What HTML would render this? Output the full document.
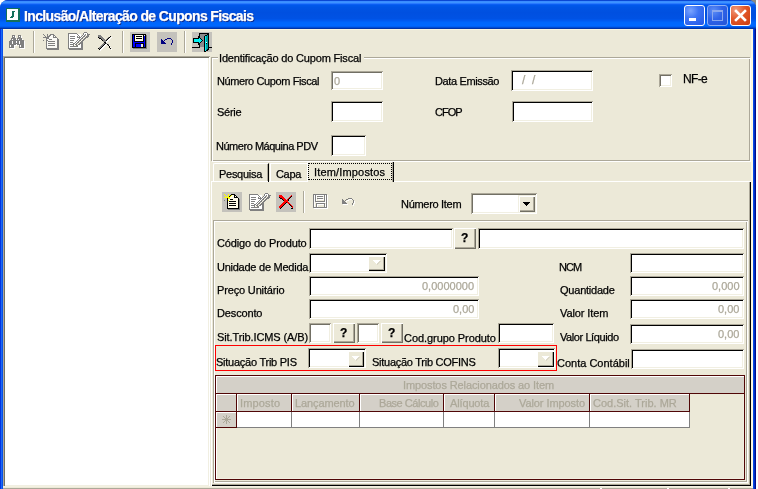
<!DOCTYPE html><html><head><meta charset="utf-8"><style>
html,body{margin:0;padding:0;width:758px;height:489px;overflow:hidden;background:#fff}
div{position:absolute;box-sizing:border-box}
.t{will-change:transform;-webkit-text-stroke:0.25px currentColor}
svg{position:absolute}
</style></head><body>
<div style="left:0px;top:0px;width:758px;height:489px;background:#fff"></div>
<div style="left:748px;top:0px;width:8px;height:6px;background:#8a8a82"></div>
<div style="left:0px;top:0px;width:756px;height:489px;background:#0a4ee0;border-radius:8px 8px 0 0;overflow:hidden"></div>
<div style="left:0px;top:0px;width:756px;height:29px;border-radius:8px 8px 0 0;background:linear-gradient(#0a47d4 0.5px,#3a8cff 1.5px,#3d93ff 2.5px,#2a7bff 3.5px,#0b5ef2 4.5px,#0058ea 5.5px,#0054e4 7.5px,#0050e0 12.5px,#0052e4 18.5px,#005af0 20.5px,#0066fc 22.5px,#0068ff 25.5px,#0060f4 26.5px,#004cd4 27.5px,#0034a8 28.5px)"></div>
<div style="left:753px;top:29px;width:1px;height:460px;background:#0a48e8"></div>
<div style="left:754px;top:29px;width:1px;height:460px;background:#0030c0"></div>
<div style="left:755px;top:29px;width:1px;height:460px;background:#000c90"></div>
<div style="left:0px;top:29px;width:1px;height:460px;background:#0434e0"></div>
<div style="left:1px;top:29px;width:1px;height:460px;background:#1a6af5"></div>
<div style="left:2px;top:29px;width:1px;height:460px;background:#0850e8"></div>
<div style="left:3px;top:29px;width:750px;height:460px;background:#ece9d8"></div>
<div style="left:3px;top:29px;width:750px;height:1px;background:#fbf5de"></div>
<div style="left:751px;top:29px;width:1px;height:460px;background:#fdf8e0"></div>
<div style="left:752px;top:29px;width:1px;height:460px;background:#fffbe4"></div>
<svg style="position:absolute;left:6px;top:8px" width="14" height="14" shape-rendering="crispEdges"><rect x="0" y="0" width="14" height="1" fill="#14705c"/><rect x="0" y="1" width="1" height="1" fill="#14705c"/><rect x="1" y="1" width="11" height="1" fill="#ffffff"/><rect x="12" y="1" width="2" height="1" fill="#14705c"/><rect x="0" y="2" width="1" height="1" fill="#14705c"/><rect x="1" y="2" width="11" height="1" fill="#ffffff"/><rect x="12" y="2" width="2" height="1" fill="#14705c"/><rect x="0" y="3" width="1" height="1" fill="#14705c"/><rect x="1" y="3" width="5" height="1" fill="#ffffff"/><rect x="6" y="3" width="3" height="1" fill="#14705c"/><rect x="9" y="3" width="3" height="1" fill="#ffffff"/><rect x="12" y="3" width="2" height="1" fill="#14705c"/><rect x="0" y="4" width="1" height="1" fill="#14705c"/><rect x="1" y="4" width="5" height="1" fill="#ffffff"/><rect x="6" y="4" width="2" height="1" fill="#14705c"/><rect x="8" y="4" width="4" height="1" fill="#ffffff"/><rect x="12" y="4" width="2" height="1" fill="#14705c"/><rect x="0" y="5" width="1" height="1" fill="#14705c"/><rect x="1" y="5" width="5" height="1" fill="#ffffff"/><rect x="6" y="5" width="2" height="1" fill="#14705c"/><rect x="8" y="5" width="4" height="1" fill="#ffffff"/><rect x="12" y="5" width="2" height="1" fill="#14705c"/><rect x="0" y="6" width="1" height="1" fill="#14705c"/><rect x="1" y="6" width="5" height="1" fill="#ffffff"/><rect x="6" y="6" width="2" height="1" fill="#14705c"/><rect x="8" y="6" width="4" height="1" fill="#ffffff"/><rect x="12" y="6" width="2" height="1" fill="#14705c"/><rect x="0" y="7" width="1" height="1" fill="#14705c"/><rect x="1" y="7" width="5" height="1" fill="#ffffff"/><rect x="6" y="7" width="2" height="1" fill="#14705c"/><rect x="8" y="7" width="4" height="1" fill="#ffffff"/><rect x="12" y="7" width="2" height="1" fill="#14705c"/><rect x="0" y="8" width="1" height="1" fill="#14705c"/><rect x="1" y="8" width="4" height="1" fill="#ffffff"/><rect x="5" y="8" width="3" height="1" fill="#14705c"/><rect x="8" y="8" width="4" height="1" fill="#ffffff"/><rect x="12" y="8" width="2" height="1" fill="#14705c"/><rect x="0" y="9" width="1" height="1" fill="#14705c"/><rect x="1" y="9" width="3" height="1" fill="#ffffff"/><rect x="4" y="9" width="3" height="1" fill="#14705c"/><rect x="7" y="9" width="5" height="1" fill="#ffffff"/><rect x="12" y="9" width="2" height="1" fill="#14705c"/><rect x="0" y="10" width="1" height="1" fill="#14705c"/><rect x="1" y="10" width="11" height="1" fill="#ffffff"/><rect x="12" y="10" width="2" height="1" fill="#14705c"/><rect x="0" y="11" width="1" height="1" fill="#14705c"/><rect x="1" y="11" width="11" height="1" fill="#ffffff"/><rect x="12" y="11" width="2" height="1" fill="#14705c"/><rect x="0" y="12" width="14" height="1" fill="#14705c"/><rect x="0" y="13" width="14" height="1" fill="#14705c"/></svg>
<div style="left:684px;top:5px;width:21px;height:21px;background:radial-gradient(circle at 30% 25%,#7aa4ff 0,#3d74f4 40%,#2257e6 100%);border:1px solid #fff;border-radius:3px"></div>
<div style="left:707px;top:5px;width:21px;height:21px;background:radial-gradient(circle at 30% 25%,#5d8ef6 0,#2f63e8 45%,#2354d6 100%);border:1px solid #8fb0f5;border-radius:3px"></div>
<div style="left:730px;top:5px;width:21px;height:21px;background:radial-gradient(circle at 25% 20%,#f09a7c 0,#e2582a 45%,#cc3c0e 100%);border:1px solid #fff;border-radius:3px"></div>
<div style="left:689px;top:18px;width:7px;height:3px;background:#fff"></div>
<div style="left:712px;top:10px;width:11px;height:11px;border:1px solid #8aa8ee;border-top-width:2px"></div>
<svg style="position:absolute;left:730px;top:5px" width="21" height="21"><path d="M6 6 L15 15 M15 6 L6 15" stroke="#fff" stroke-width="2.6" stroke-linecap="square"/></svg>
<div style="left:33px;top:31px;width:1px;height:22px;background:#aca899"></div>
<div style="left:34px;top:31px;width:1px;height:22px;background:#fff"></div>
<div style="left:122px;top:31px;width:1px;height:22px;background:#aca899"></div>
<div style="left:123px;top:31px;width:1px;height:22px;background:#fff"></div>
<div style="left:184px;top:31px;width:1px;height:22px;background:#aca899"></div>
<div style="left:185px;top:31px;width:1px;height:22px;background:#fff"></div>
<div style="left:130px;top:32px;width:20px;height:20px;background:#c4c2bc"></div>
<div style="left:157px;top:32px;width:20px;height:20px;background:#c4c2bc"></div>
<div style="left:192px;top:32px;width:20px;height:20px;background:#c4c2bc"></div>
<div style="left:3px;top:56px;width:207px;height:431px;background:#fff;box-shadow:inset 1px 1px #aca899,inset -1px -1px #fff,inset 2px 2px #716f64,inset -2px -2px #f1efe2"></div>
<div style="left:3px;top:486px;width:750px;height:1px;background:#f4f1e2"></div>
<div style="left:3px;top:488px;width:750px;height:1px;background:#aca899"></div>
<div style="left:600px;top:488px;width:2px;height:1px;background:#fff"></div>
<div style="left:667px;top:488px;width:2px;height:1px;background:#fff"></div>
<div style="left:728px;top:488px;width:2px;height:1px;background:#fff"></div>
<div style="left:211px;top:57px;width:539px;height:104px;border:1px solid #aca899"></div>
<div style="left:212px;top:58px;width:539px;height:104px;border:1px solid #fff"></div>
<div style="left:218px;top:52px;width:146px;height:12px;background:#ece9d8"></div>
<div style="left:331px;top:71px;width:52px;height:19px;background:#fff;box-shadow:inset 1px 1px #aca899,inset -1px -1px #fff,inset 2px 2px #716f64,inset -2px -2px #f1efe2"></div>
<div style="left:331px;top:101px;width:52px;height:21px;background:#fff;box-shadow:inset 1px 1px #aca899,inset -1px -1px #fff,inset 2px 2px #000,inset -2px -2px #f1efe2"></div>
<div style="left:331px;top:135px;width:35px;height:21px;background:#fff;box-shadow:inset 1px 1px #aca899,inset -1px -1px #fff,inset 2px 2px #000,inset -2px -2px #f1efe2"></div>
<div style="left:511px;top:70px;width:82px;height:21px;background:#fff;box-shadow:inset 1px 1px #aca899,inset -1px -1px #fff,inset 2px 2px #000,inset -2px -2px #f1efe2"></div>
<div style="left:512px;top:101px;width:81px;height:21px;background:#fff;box-shadow:inset 1px 1px #aca899,inset -1px -1px #fff,inset 2px 2px #000,inset -2px -2px #f1efe2"></div>
<div style="left:659px;top:74px;width:13px;height:13px;background:#fff;box-shadow:inset 1px 1px #aca899,inset -1px -1px #fff,inset 2px 2px #716f64,inset -2px -2px #f1efe2"></div>
<div style="left:211px;top:181px;width:540px;height:305px;box-shadow:inset 1px 1px #fff,inset -1px -1px #000,inset -2px -2px #aca899"></div>
<div style="left:213px;top:163px;width:56px;height:19px;border-left:1px solid #fff;border-top:1px solid #fff;border-right:1px solid #000;border-radius:2px 0 0 0"></div>
<div style="left:268px;top:164px;width:1px;height:17px;background:#000"></div>
<div style="left:267px;top:164px;width:1px;height:17px;background:#aca899"></div>
<div style="left:270px;top:163px;width:38px;height:19px;border-top:1px solid #fff;border-left:1px solid #fff"></div>
<div style="left:307px;top:161px;width:87px;height:21px;background:#ece9d8;border-left:1px solid #fff;border-top:1px solid #fff;border-radius:2px 2px 0 0"></div>
<div style="left:393px;top:162px;width:1px;height:20px;background:#000"></div>
<div style="left:392px;top:162px;width:1px;height:20px;background:#aca899"></div>
<div style="left:308px;top:163px;width:84px;height:17px;border:1px dotted #000"></div>
<div style="left:222px;top:192px;width:20px;height:20px;background:#c4c2bc"></div>
<div style="left:276px;top:192px;width:20px;height:20px;background:#c4c2bc"></div>
<div style="left:303px;top:191px;width:1px;height:22px;background:#aca899"></div>
<div style="left:304px;top:191px;width:1px;height:22px;background:#fff"></div>
<div style="left:471px;top:193px;width:66px;height:21px;background:#fff;box-shadow:inset 1px 1px #aca899,inset -1px -1px #fff,inset 2px 2px #716f64,inset -2px -2px #f1efe2"></div>
<div style="left:518px;top:195px;width:17px;height:17px;background:#ece9d8;box-shadow:inset 1px 1px #f1efe2,inset 2px 2px #fff,inset -1px -1px #716f64,inset -2px -2px #aca899"></div>
<svg style="position:absolute;left:523px;top:202px" width="7" height="4" shape-rendering="crispEdges"><path d="M0 0h7v1h-1v1h-1v1h-1v1h-1v-1h-1v-1h-1v-1h-1z" fill="#000"/></svg>
<div style="left:213px;top:220px;width:535px;height:263px;box-shadow:inset 1px 1px #aca899,inset -1px -1px #fff,inset 2px 2px #fff,inset -2px -2px #aca899"></div>
<div style="left:309px;top:228px;width:144px;height:21px;background:#fff;box-shadow:inset 1px 1px #aca899,inset -1px -1px #fff,inset 2px 2px #000,inset -2px -2px #f1efe2"></div>
<div style="left:454px;top:228px;width:22px;height:21px;background:#ece9d8;box-shadow:inset 1px 1px #fff,inset -1px -1px #716f64,inset -2px -2px #aca899"></div>
<div style="left:478px;top:228px;width:266px;height:21px;background:#fff;box-shadow:inset 1px 1px #aca899,inset -1px -1px #fff,inset 2px 2px #000,inset -2px -2px #f1efe2"></div>
<div style="left:309px;top:253px;width:78px;height:20px;background:#fff;box-shadow:inset 1px 1px #aca899,inset -1px -1px #fff,inset 2px 2px #000,inset -2px -2px #f1efe2"></div>
<div style="left:368px;top:256px;width:17px;height:15px;background:#ece9d8;box-shadow:inset 1px 1px #fff,inset -1px -1px #000,inset -2px -2px #aca899"></div>
<svg style="position:absolute;left:373px;top:260px" width="9" height="6" shape-rendering="crispEdges"><path d="M1 1h7v1h-1v1h-1v1h-1v1h-1v-1h-1v-1h-1v-1h-1z" fill="#dcd8c8"/><path d="M0 0h7v1h-1v1h-1v1h-1v1h-1v-1h-1v-1h-1v-1h-1z" fill="#fff"/></svg>
<div style="left:630px;top:253px;width:114px;height:20px;background:#fff;box-shadow:inset 1px 1px #aca899,inset -1px -1px #fff,inset 2px 2px #000,inset -2px -2px #f1efe2"></div>
<div style="left:309px;top:276px;width:170px;height:20px;background:#fff;box-shadow:inset 1px 1px #aca899,inset -1px -1px #fff,inset 2px 2px #000,inset -2px -2px #f1efe2"></div>
<div style="left:630px;top:276px;width:114px;height:20px;background:#fff;box-shadow:inset 1px 1px #aca899,inset -1px -1px #fff,inset 2px 2px #000,inset -2px -2px #f1efe2"></div>
<div style="left:309px;top:299px;width:170px;height:20px;background:#fff;box-shadow:inset 1px 1px #aca899,inset -1px -1px #fff,inset 2px 2px #000,inset -2px -2px #f1efe2"></div>
<div style="left:630px;top:299px;width:114px;height:20px;background:#fff;box-shadow:inset 1px 1px #aca899,inset -1px -1px #fff,inset 2px 2px #000,inset -2px -2px #f1efe2"></div>
<div style="left:309px;top:323px;width:22px;height:20px;background:#fff;box-shadow:inset 1px 1px #aca899,inset -1px -1px #fff,inset 2px 2px #716f64,inset -2px -2px #f1efe2"></div>
<div style="left:333px;top:323px;width:22px;height:20px;background:#ece9d8;box-shadow:inset 1px 1px #fff,inset -1px -1px #716f64,inset -2px -2px #aca899"></div>
<div style="left:357px;top:323px;width:22px;height:20px;background:#fff;box-shadow:inset 1px 1px #aca899,inset -1px -1px #fff,inset 2px 2px #716f64,inset -2px -2px #f1efe2"></div>
<div style="left:381px;top:323px;width:22px;height:20px;background:#ece9d8;box-shadow:inset 1px 1px #fff,inset -1px -1px #716f64,inset -2px -2px #aca899"></div>
<div style="left:498px;top:323px;width:56px;height:20px;background:#fff;box-shadow:inset 1px 1px #aca899,inset -1px -1px #fff,inset 2px 2px #000,inset -2px -2px #f1efe2"></div>
<div style="left:630px;top:324px;width:114px;height:20px;background:#fff;box-shadow:inset 1px 1px #aca899,inset -1px -1px #fff,inset 2px 2px #000,inset -2px -2px #f1efe2"></div>
<div style="left:215px;top:345px;width:342px;height:26px;border:1px solid #f00"></div>
<div style="left:308px;top:348px;width:58px;height:20px;background:#fff;box-shadow:inset 1px 1px #aca899,inset -1px -1px #fff,inset 2px 2px #000,inset -2px -2px #f1efe2"></div>
<div style="left:348px;top:351px;width:16px;height:16px;background:#ece9d8;box-shadow:inset 1px 1px #fff,inset -1px -1px #000,inset -2px -2px #aca899"></div>
<svg style="position:absolute;left:352px;top:356px" width="9" height="6" shape-rendering="crispEdges"><path d="M1 1h7v1h-1v1h-1v1h-1v1h-1v-1h-1v-1h-1v-1h-1z" fill="#dcd8c8"/><path d="M0 0h7v1h-1v1h-1v1h-1v1h-1v-1h-1v-1h-1v-1h-1z" fill="#fff"/></svg>
<div style="left:498px;top:348px;width:57px;height:20px;background:#fff;box-shadow:inset 1px 1px #aca899,inset -1px -1px #fff,inset 2px 2px #000,inset -2px -2px #f1efe2"></div>
<div style="left:537px;top:351px;width:17px;height:16px;background:#ece9d8;box-shadow:inset 1px 1px #fff,inset -1px -1px #000,inset -2px -2px #aca899"></div>
<svg style="position:absolute;left:542px;top:356px" width="9" height="6" shape-rendering="crispEdges"><path d="M1 1h7v1h-1v1h-1v1h-1v1h-1v-1h-1v-1h-1v-1h-1z" fill="#dcd8c8"/><path d="M0 0h7v1h-1v1h-1v1h-1v1h-1v-1h-1v-1h-1v-1h-1z" fill="#fff"/></svg>
<div style="left:631px;top:349px;width:113px;height:20px;background:#fff;box-shadow:inset 1px 1px #aca899,inset -1px -1px #fff,inset 2px 2px #000,inset -2px -2px #f1efe2"></div>
<div style="left:215px;top:375px;width:530px;height:105px;border:1px solid #500606;box-shadow:inset 1px 1px #fff,inset -1px -1px #f1efe2"></div>
<div style="left:216px;top:376px;width:528px;height:17px;background:#d4d0c8;box-shadow:inset 1px 1px #fff"></div>
<div style="left:216px;top:393px;width:528px;height:1px;background:#500606"></div>
<div style="left:216px;top:394px;width:21px;height:18px;background:#d4d0c8;box-shadow:inset 1px 1px #fff;border-right:1px solid #500606;border-bottom:1px solid #500606"></div>
<div style="left:237px;top:394px;width:55px;height:18px;background:#d4d0c8;box-shadow:inset 1px 1px #fff;border-right:1px solid #500606;border-bottom:1px solid #500606"></div>
<div style="left:292px;top:394px;width:68px;height:18px;background:#d4d0c8;box-shadow:inset 1px 1px #fff;border-right:1px solid #500606;border-bottom:1px solid #500606"></div>
<div style="left:360px;top:394px;width:84px;height:18px;background:#d4d0c8;box-shadow:inset 1px 1px #fff;border-right:1px solid #500606;border-bottom:1px solid #500606"></div>
<div style="left:444px;top:394px;width:51px;height:18px;background:#d4d0c8;box-shadow:inset 1px 1px #fff;border-right:1px solid #500606;border-bottom:1px solid #500606"></div>
<div style="left:495px;top:394px;width:95px;height:18px;background:#d4d0c8;box-shadow:inset 1px 1px #fff;border-right:1px solid #500606;border-bottom:1px solid #500606"></div>
<div style="left:590px;top:394px;width:100px;height:18px;background:#d4d0c8;box-shadow:inset 1px 1px #fff;border-right:1px solid #500606;border-bottom:1px solid #500606"></div>
<div style="left:216px;top:412px;width:21px;height:16px;background:#d4d0c8;box-shadow:inset 1px 1px #fff;border-right:1px solid #500606;border-bottom:1px solid #500606"></div>
<div style="left:237px;top:412px;width:55px;height:16px;background:#fff;border-right:1px solid #808080;border-bottom:1px solid #808080"></div>
<div style="left:292px;top:412px;width:68px;height:16px;background:#fff;border-right:1px solid #808080;border-bottom:1px solid #808080"></div>
<div style="left:360px;top:412px;width:84px;height:16px;background:#fff;border-right:1px solid #808080;border-bottom:1px solid #808080"></div>
<div style="left:444px;top:412px;width:51px;height:16px;background:#fff;border-right:1px solid #808080;border-bottom:1px solid #808080"></div>
<div style="left:495px;top:412px;width:95px;height:16px;background:#fff;border-right:1px solid #808080;border-bottom:1px solid #808080"></div>
<div style="left:590px;top:412px;width:100px;height:16px;background:#fff;border-right:1px solid #808080;border-bottom:1px solid #808080"></div>
<svg style="position:absolute;left:221px;top:414px" width="11" height="11" shape-rendering="crispEdges"><g fill="#aca899"><rect x="1" y="5" width="9" height="1"/><rect x="5" y="1" width="1" height="9"/><rect x="4" y="4" width="3" height="3"/><rect x="2" y="2" width="1" height="1"/><rect x="3" y="3" width="1" height="1"/><rect x="8" y="2" width="1" height="1"/><rect x="7" y="3" width="1" height="1"/><rect x="2" y="8" width="1" height="1"/><rect x="3" y="7" width="1" height="1"/><rect x="8" y="8" width="1" height="1"/><rect x="7" y="7" width="1" height="1"/></g></svg>
<svg style="position:absolute;left:8px;top:32px" width="17" height="17" shape-rendering="crispEdges"><rect x="4" y="3" width="3" height="1" fill="#808080"/><rect x="10" y="3" width="3" height="1" fill="#808080"/><rect x="4" y="4" width="1" height="1" fill="#808080"/><rect x="5" y="4" width="1" height="1" fill="#ffffff"/><rect x="6" y="4" width="1" height="1" fill="#808080"/><rect x="7" y="4" width="1" height="1" fill="#ffffff"/><rect x="10" y="4" width="1" height="1" fill="#808080"/><rect x="11" y="4" width="1" height="1" fill="#ffffff"/><rect x="12" y="4" width="1" height="1" fill="#808080"/><rect x="13" y="4" width="1" height="1" fill="#ffffff"/><rect x="4" y="5" width="3" height="1" fill="#808080"/><rect x="7" y="5" width="1" height="1" fill="#ffffff"/><rect x="10" y="5" width="3" height="1" fill="#808080"/><rect x="13" y="5" width="1" height="1" fill="#ffffff"/><rect x="3" y="6" width="5" height="1" fill="#808080"/><rect x="9" y="6" width="5" height="1" fill="#808080"/><rect x="3" y="7" width="1" height="1" fill="#808080"/><rect x="4" y="7" width="1" height="1" fill="#ffffff"/><rect x="5" y="7" width="3" height="1" fill="#808080"/><rect x="8" y="7" width="1" height="1" fill="#ffffff"/><rect x="9" y="7" width="1" height="1" fill="#808080"/><rect x="10" y="7" width="1" height="1" fill="#ffffff"/><rect x="11" y="7" width="3" height="1" fill="#808080"/><rect x="14" y="7" width="1" height="1" fill="#ffffff"/><rect x="2" y="8" width="14" height="1" fill="#808080"/><rect x="1" y="9" width="3" height="1" fill="#808080"/><rect x="4" y="9" width="1" height="1" fill="#ffffff"/><rect x="5" y="9" width="3" height="1" fill="#808080"/><rect x="8" y="9" width="1" height="1" fill="#ffffff"/><rect x="9" y="9" width="2" height="1" fill="#808080"/><rect x="11" y="9" width="1" height="1" fill="#ffffff"/><rect x="12" y="9" width="4" height="1" fill="#808080"/><rect x="16" y="9" width="1" height="1" fill="#ffffff"/><rect x="1" y="10" width="3" height="1" fill="#808080"/><rect x="4" y="10" width="1" height="1" fill="#ffffff"/><rect x="5" y="10" width="3" height="1" fill="#808080"/><rect x="8" y="10" width="1" height="1" fill="#ffffff"/><rect x="9" y="10" width="2" height="1" fill="#808080"/><rect x="11" y="10" width="1" height="1" fill="#ffffff"/><rect x="12" y="10" width="4" height="1" fill="#808080"/><rect x="16" y="10" width="1" height="1" fill="#ffffff"/><rect x="1" y="11" width="3" height="1" fill="#808080"/><rect x="4" y="11" width="1" height="1" fill="#ffffff"/><rect x="5" y="11" width="6" height="1" fill="#808080"/><rect x="11" y="11" width="1" height="1" fill="#ffffff"/><rect x="12" y="11" width="4" height="1" fill="#808080"/><rect x="16" y="11" width="1" height="1" fill="#ffffff"/><rect x="1" y="12" width="7" height="1" fill="#808080"/><rect x="8" y="12" width="1" height="1" fill="#ffffff"/><rect x="9" y="12" width="7" height="1" fill="#808080"/><rect x="16" y="12" width="1" height="1" fill="#ffffff"/><rect x="1" y="13" width="1" height="1" fill="#808080"/><rect x="2" y="13" width="1" height="1" fill="#ffffff"/><rect x="3" y="13" width="3" height="1" fill="#808080"/><rect x="6" y="13" width="3" height="1" fill="#ffffff"/><rect x="10" y="13" width="1" height="1" fill="#ffffff"/><rect x="11" y="13" width="1" height="1" fill="#808080"/><rect x="12" y="13" width="1" height="1" fill="#ffffff"/><rect x="13" y="13" width="3" height="1" fill="#808080"/><rect x="16" y="13" width="1" height="1" fill="#ffffff"/><rect x="1" y="14" width="1" height="1" fill="#808080"/><rect x="2" y="14" width="1" height="1" fill="#ffffff"/><rect x="3" y="14" width="3" height="1" fill="#808080"/><rect x="6" y="14" width="1" height="1" fill="#ffffff"/><rect x="11" y="14" width="1" height="1" fill="#808080"/><rect x="12" y="14" width="1" height="1" fill="#ffffff"/><rect x="13" y="14" width="3" height="1" fill="#808080"/><rect x="16" y="14" width="1" height="1" fill="#ffffff"/><rect x="1" y="15" width="5" height="1" fill="#808080"/><rect x="6" y="15" width="1" height="1" fill="#ffffff"/><rect x="11" y="15" width="5" height="1" fill="#808080"/><rect x="16" y="15" width="1" height="1" fill="#ffffff"/><rect x="2" y="16" width="5" height="1" fill="#ffffff"/><rect x="12" y="16" width="5" height="1" fill="#ffffff"/></svg>
<svg style="position:absolute;left:40px;top:31px" width="20" height="20" shape-rendering="crispEdges"><rect x="3" y="3" width="1" height="1" fill="#808080"/><rect x="7" y="3" width="1" height="1" fill="#808080"/><rect x="10" y="3" width="4" height="1" fill="#808080"/><rect x="4" y="4" width="1" height="1" fill="#808080"/><rect x="7" y="4" width="1" height="1" fill="#808080"/><rect x="9" y="4" width="2" height="1" fill="#808080"/><rect x="11" y="4" width="2" height="1" fill="#fbfaf6"/><rect x="13" y="4" width="2" height="1" fill="#808080"/><rect x="5" y="5" width="1" height="1" fill="#808080"/><rect x="7" y="5" width="3" height="1" fill="#808080"/><rect x="10" y="5" width="3" height="1" fill="#fbfaf6"/><rect x="13" y="5" width="1" height="1" fill="#808080"/><rect x="14" y="5" width="1" height="1" fill="#fbfaf6"/><rect x="15" y="5" width="1" height="1" fill="#808080"/><rect x="3" y="6" width="6" height="1" fill="#808080"/><rect x="9" y="6" width="4" height="1" fill="#fbfaf6"/><rect x="13" y="6" width="4" height="1" fill="#808080"/><rect x="6" y="7" width="3" height="1" fill="#808080"/><rect x="9" y="7" width="8" height="1" fill="#fbfaf6"/><rect x="17" y="7" width="1" height="1" fill="#808080"/><rect x="6" y="8" width="1" height="1" fill="#808080"/><rect x="7" y="8" width="2" height="1" fill="#fbfaf6"/><rect x="9" y="8" width="3" height="1" fill="#808080"/><rect x="12" y="8" width="5" height="1" fill="#fbfaf6"/><rect x="17" y="8" width="2" height="1" fill="#808080"/><rect x="3" y="9" width="1" height="1" fill="#808080"/><rect x="6" y="9" width="2" height="1" fill="#808080"/><rect x="8" y="9" width="9" height="1" fill="#fbfaf6"/><rect x="17" y="9" width="2" height="1" fill="#808080"/><rect x="6" y="10" width="1" height="1" fill="#808080"/><rect x="7" y="10" width="1" height="1" fill="#fbfaf6"/><rect x="8" y="10" width="7" height="1" fill="#808080"/><rect x="15" y="10" width="2" height="1" fill="#fbfaf6"/><rect x="17" y="10" width="2" height="1" fill="#808080"/><rect x="6" y="11" width="1" height="1" fill="#808080"/><rect x="7" y="11" width="10" height="1" fill="#fbfaf6"/><rect x="17" y="11" width="2" height="1" fill="#808080"/><rect x="6" y="12" width="1" height="1" fill="#808080"/><rect x="7" y="12" width="1" height="1" fill="#fbfaf6"/><rect x="8" y="12" width="7" height="1" fill="#808080"/><rect x="15" y="12" width="2" height="1" fill="#fbfaf6"/><rect x="17" y="12" width="2" height="1" fill="#808080"/><rect x="6" y="13" width="1" height="1" fill="#808080"/><rect x="7" y="13" width="10" height="1" fill="#fbfaf6"/><rect x="17" y="13" width="2" height="1" fill="#808080"/><rect x="6" y="14" width="1" height="1" fill="#808080"/><rect x="7" y="14" width="1" height="1" fill="#fbfaf6"/><rect x="8" y="14" width="7" height="1" fill="#808080"/><rect x="15" y="14" width="2" height="1" fill="#fbfaf6"/><rect x="17" y="14" width="2" height="1" fill="#808080"/><rect x="6" y="15" width="1" height="1" fill="#808080"/><rect x="7" y="15" width="10" height="1" fill="#fbfaf6"/><rect x="17" y="15" width="2" height="1" fill="#808080"/><rect x="6" y="16" width="1" height="1" fill="#808080"/><rect x="7" y="16" width="10" height="1" fill="#fbfaf6"/><rect x="17" y="16" width="2" height="1" fill="#808080"/><rect x="6" y="17" width="13" height="1" fill="#808080"/><rect x="7" y="18" width="12" height="1" fill="#808080"/></svg>
<svg style="position:absolute;left:66px;top:31px" width="24" height="20" shape-rendering="crispEdges"><rect x="18" y="1" width="3" height="1" fill="#808080"/><rect x="2" y="2" width="9" height="1" fill="#808080"/><rect x="17" y="2" width="1" height="1" fill="#808080"/><rect x="18" y="2" width="3" height="1" fill="#ffffff"/><rect x="21" y="2" width="1" height="1" fill="#808080"/><rect x="2" y="3" width="1" height="1" fill="#808080"/><rect x="3" y="3" width="8" height="1" fill="#ffffff"/><rect x="11" y="3" width="1" height="1" fill="#808080"/><rect x="12" y="3" width="3" height="1" fill="#ffffff"/><rect x="17" y="3" width="1" height="1" fill="#808080"/><rect x="18" y="3" width="1" height="1" fill="#ffffff"/><rect x="19" y="3" width="1" height="1" fill="#808080"/><rect x="20" y="3" width="1" height="1" fill="#ffffff"/><rect x="21" y="3" width="3" height="1" fill="#808080"/><rect x="2" y="4" width="1" height="1" fill="#808080"/><rect x="3" y="4" width="9" height="1" fill="#ffffff"/><rect x="12" y="4" width="1" height="1" fill="#808080"/><rect x="13" y="4" width="2" height="1" fill="#ffffff"/><rect x="16" y="4" width="1" height="1" fill="#808080"/><rect x="17" y="4" width="1" height="1" fill="#ffffff"/><rect x="18" y="4" width="1" height="1" fill="#808080"/><rect x="19" y="4" width="1" height="1" fill="#b4b4b4"/><rect x="20" y="4" width="1" height="1" fill="#fbf7e8"/><rect x="21" y="4" width="2" height="1" fill="#808080"/><rect x="2" y="5" width="1" height="1" fill="#808080"/><rect x="3" y="5" width="1" height="1" fill="#ffffff"/><rect x="4" y="5" width="5" height="1" fill="#808080"/><rect x="9" y="5" width="2" height="1" fill="#ffffff"/><rect x="11" y="5" width="1" height="1" fill="#808080"/><rect x="12" y="5" width="1" height="1" fill="#ffffff"/><rect x="13" y="5" width="1" height="1" fill="#808080"/><rect x="14" y="5" width="1" height="1" fill="#ffffff"/><rect x="15" y="5" width="1" height="1" fill="#808080"/><rect x="16" y="5" width="1" height="1" fill="#ffffff"/><rect x="17" y="5" width="2" height="1" fill="#808080"/><rect x="19" y="5" width="1" height="1" fill="#fbf7e8"/><rect x="20" y="5" width="3" height="1" fill="#808080"/><rect x="2" y="6" width="1" height="1" fill="#808080"/><rect x="3" y="6" width="8" height="1" fill="#ffffff"/><rect x="11" y="6" width="4" height="1" fill="#808080"/><rect x="15" y="6" width="1" height="1" fill="#ffffff"/><rect x="16" y="6" width="1" height="1" fill="#808080"/><rect x="17" y="6" width="1" height="1" fill="#b4b4b4"/><rect x="18" y="6" width="1" height="1" fill="#fbf7e8"/><rect x="19" y="6" width="3" height="1" fill="#808080"/><rect x="2" y="7" width="1" height="1" fill="#808080"/><rect x="3" y="7" width="1" height="1" fill="#ffffff"/><rect x="4" y="7" width="5" height="1" fill="#808080"/><rect x="9" y="7" width="4" height="1" fill="#ffffff"/><rect x="13" y="7" width="1" height="1" fill="#808080"/><rect x="14" y="7" width="1" height="1" fill="#ffffff"/><rect x="15" y="7" width="2" height="1" fill="#808080"/><rect x="17" y="7" width="1" height="1" fill="#fbf7e8"/><rect x="18" y="7" width="2" height="1" fill="#808080"/><rect x="2" y="8" width="1" height="1" fill="#808080"/><rect x="3" y="8" width="9" height="1" fill="#ffffff"/><rect x="12" y="8" width="1" height="1" fill="#808080"/><rect x="13" y="8" width="1" height="1" fill="#ffffff"/><rect x="14" y="8" width="1" height="1" fill="#808080"/><rect x="15" y="8" width="1" height="1" fill="#b4b4b4"/><rect x="16" y="8" width="1" height="1" fill="#fbf7e8"/><rect x="17" y="8" width="2" height="1" fill="#808080"/><rect x="2" y="9" width="1" height="1" fill="#808080"/><rect x="3" y="9" width="1" height="1" fill="#ffffff"/><rect x="4" y="9" width="4" height="1" fill="#808080"/><rect x="8" y="9" width="3" height="1" fill="#ffffff"/><rect x="11" y="9" width="1" height="1" fill="#808080"/><rect x="12" y="9" width="1" height="1" fill="#ffffff"/><rect x="13" y="9" width="2" height="1" fill="#808080"/><rect x="15" y="9" width="1" height="1" fill="#fbf7e8"/><rect x="16" y="9" width="2" height="1" fill="#808080"/><rect x="2" y="10" width="1" height="1" fill="#808080"/><rect x="3" y="10" width="7" height="1" fill="#ffffff"/><rect x="10" y="10" width="1" height="1" fill="#808080"/><rect x="11" y="10" width="1" height="1" fill="#ffffff"/><rect x="12" y="10" width="1" height="1" fill="#808080"/><rect x="13" y="10" width="1" height="1" fill="#b4b4b4"/><rect x="14" y="10" width="1" height="1" fill="#fbf7e8"/><rect x="15" y="10" width="2" height="1" fill="#808080"/><rect x="2" y="11" width="1" height="1" fill="#808080"/><rect x="3" y="11" width="1" height="1" fill="#ffffff"/><rect x="4" y="11" width="3" height="1" fill="#808080"/><rect x="7" y="11" width="2" height="1" fill="#ffffff"/><rect x="9" y="11" width="1" height="1" fill="#808080"/><rect x="10" y="11" width="1" height="1" fill="#ffffff"/><rect x="11" y="11" width="2" height="1" fill="#808080"/><rect x="13" y="11" width="1" height="1" fill="#fbf7e8"/><rect x="14" y="11" width="3" height="1" fill="#808080"/><rect x="2" y="12" width="1" height="1" fill="#808080"/><rect x="3" y="12" width="4" height="1" fill="#ffffff"/><rect x="7" y="12" width="2" height="1" fill="#808080"/><rect x="9" y="12" width="1" height="1" fill="#ffffff"/><rect x="10" y="12" width="1" height="1" fill="#808080"/><rect x="11" y="12" width="1" height="1" fill="#b4b4b4"/><rect x="12" y="12" width="1" height="1" fill="#fbf7e8"/><rect x="13" y="12" width="4" height="1" fill="#808080"/><rect x="2" y="13" width="1" height="1" fill="#808080"/><rect x="3" y="13" width="1" height="1" fill="#ffffff"/><rect x="4" y="13" width="4" height="1" fill="#808080"/><rect x="8" y="13" width="1" height="1" fill="#ffffff"/><rect x="9" y="13" width="2" height="1" fill="#808080"/><rect x="11" y="13" width="1" height="1" fill="#fbf7e8"/><rect x="12" y="13" width="2" height="1" fill="#808080"/><rect x="14" y="13" width="1" height="1" fill="#ffffff"/><rect x="15" y="13" width="2" height="1" fill="#808080"/><rect x="2" y="14" width="1" height="1" fill="#808080"/><rect x="3" y="14" width="4" height="1" fill="#ffffff"/><rect x="7" y="14" width="1" height="1" fill="#808080"/><rect x="8" y="14" width="2" height="1" fill="#fbf7e8"/><rect x="10" y="14" width="2" height="1" fill="#808080"/><rect x="12" y="14" width="3" height="1" fill="#ffffff"/><rect x="15" y="14" width="2" height="1" fill="#808080"/><rect x="2" y="15" width="1" height="1" fill="#808080"/><rect x="3" y="15" width="1" height="1" fill="#ffffff"/><rect x="4" y="15" width="8" height="1" fill="#808080"/><rect x="12" y="15" width="3" height="1" fill="#ffffff"/><rect x="15" y="15" width="2" height="1" fill="#808080"/><rect x="2" y="16" width="1" height="1" fill="#808080"/><rect x="3" y="16" width="12" height="1" fill="#ffffff"/><rect x="15" y="16" width="2" height="1" fill="#808080"/><rect x="2" y="17" width="15" height="1" fill="#808080"/><rect x="3" y="18" width="14" height="1" fill="#808080"/></svg>
<svg style="position:absolute;left:96px;top:34px" width="17" height="17" shape-rendering="crispEdges"><rect x="2" y="1" width="3" height="1" fill="#808080"/><rect x="2" y="2" width="4" height="1" fill="#808080"/><rect x="14" y="2" width="1" height="1" fill="#000000"/><rect x="2" y="3" width="1" height="1" fill="#000000"/><rect x="3" y="3" width="4" height="1" fill="#808080"/><rect x="12" y="3" width="1" height="1" fill="#808080"/><rect x="13" y="3" width="1" height="1" fill="#000000"/><rect x="15" y="3" width="1" height="1" fill="#ffffff"/><rect x="3" y="4" width="2" height="1" fill="#000000"/><rect x="5" y="4" width="3" height="1" fill="#808080"/><rect x="11" y="4" width="1" height="1" fill="#808080"/><rect x="12" y="4" width="1" height="1" fill="#000000"/><rect x="13" y="4" width="2" height="1" fill="#ffffff"/><rect x="4" y="5" width="1" height="1" fill="#ffffff"/><rect x="5" y="5" width="1" height="1" fill="#000000"/><rect x="6" y="5" width="3" height="1" fill="#808080"/><rect x="10" y="5" width="1" height="1" fill="#808080"/><rect x="11" y="5" width="1" height="1" fill="#000000"/><rect x="12" y="5" width="2" height="1" fill="#ffffff"/><rect x="6" y="6" width="1" height="1" fill="#000000"/><rect x="7" y="6" width="3" height="1" fill="#808080"/><rect x="10" y="6" width="1" height="1" fill="#000000"/><rect x="11" y="6" width="2" height="1" fill="#ffffff"/><rect x="7" y="7" width="3" height="1" fill="#808080"/><rect x="10" y="7" width="2" height="1" fill="#ffffff"/><rect x="8" y="8" width="2" height="1" fill="#000000"/><rect x="10" y="8" width="1" height="1" fill="#ffffff"/><rect x="7" y="9" width="2" height="1" fill="#808080"/><rect x="9" y="9" width="1" height="1" fill="#000000"/><rect x="10" y="9" width="1" height="1" fill="#808080"/><rect x="6" y="10" width="2" height="1" fill="#808080"/><rect x="8" y="10" width="1" height="1" fill="#000000"/><rect x="9" y="10" width="2" height="1" fill="#ffffff"/><rect x="11" y="10" width="1" height="1" fill="#000000"/><rect x="12" y="10" width="1" height="1" fill="#808080"/><rect x="5" y="11" width="2" height="1" fill="#808080"/><rect x="7" y="11" width="1" height="1" fill="#000000"/><rect x="8" y="11" width="2" height="1" fill="#ffffff"/><rect x="12" y="11" width="1" height="1" fill="#000000"/><rect x="13" y="11" width="1" height="1" fill="#ffffff"/><rect x="4" y="12" width="2" height="1" fill="#808080"/><rect x="6" y="12" width="1" height="1" fill="#000000"/><rect x="7" y="12" width="2" height="1" fill="#ffffff"/><rect x="13" y="12" width="1" height="1" fill="#000000"/><rect x="3" y="13" width="2" height="1" fill="#808080"/><rect x="5" y="13" width="1" height="1" fill="#000000"/><rect x="6" y="13" width="2" height="1" fill="#ffffff"/><rect x="13" y="13" width="1" height="1" fill="#000000"/><rect x="14" y="13" width="1" height="1" fill="#ffffff"/><rect x="2" y="14" width="1" height="1" fill="#000000"/><rect x="3" y="14" width="1" height="1" fill="#808080"/><rect x="4" y="14" width="1" height="1" fill="#000000"/><rect x="5" y="14" width="2" height="1" fill="#ffffff"/><rect x="14" y="14" width="1" height="1" fill="#000000"/><rect x="3" y="15" width="1" height="1" fill="#000000"/><rect x="4" y="15" width="2" height="1" fill="#ffffff"/><rect x="15" y="15" width="1" height="1" fill="#ffffff"/><rect x="4" y="16" width="1" height="1" fill="#ffffff"/></svg>
<svg style="position:absolute;left:130px;top:32px" width="18" height="17" shape-rendering="crispEdges"><rect x="2" y="2" width="14" height="1" fill="#000000"/><rect x="2" y="3" width="1" height="1" fill="#000000"/><rect x="3" y="3" width="1" height="1" fill="#0000ff"/><rect x="4" y="3" width="1" height="1" fill="#000000"/><rect x="5" y="3" width="8" height="1" fill="#fffbe8"/><rect x="13" y="3" width="1" height="1" fill="#000000"/><rect x="14" y="3" width="1" height="1" fill="#e8e8e8"/><rect x="15" y="3" width="1" height="1" fill="#000000"/><rect x="16" y="3" width="1" height="1" fill="#808080"/><rect x="2" y="4" width="1" height="1" fill="#000000"/><rect x="3" y="4" width="1" height="1" fill="#0000ff"/><rect x="4" y="4" width="1" height="1" fill="#000000"/><rect x="5" y="4" width="1" height="1" fill="#fffbe8"/><rect x="6" y="4" width="6" height="1" fill="#000000"/><rect x="12" y="4" width="1" height="1" fill="#fffbe8"/><rect x="13" y="4" width="1" height="1" fill="#000000"/><rect x="14" y="4" width="1" height="1" fill="#0000ff"/><rect x="15" y="4" width="1" height="1" fill="#000000"/><rect x="16" y="4" width="1" height="1" fill="#808080"/><rect x="2" y="5" width="1" height="1" fill="#000000"/><rect x="3" y="5" width="1" height="1" fill="#0000ff"/><rect x="4" y="5" width="1" height="1" fill="#000000"/><rect x="5" y="5" width="8" height="1" fill="#fffbe8"/><rect x="13" y="5" width="1" height="1" fill="#000000"/><rect x="14" y="5" width="1" height="1" fill="#0000ff"/><rect x="15" y="5" width="1" height="1" fill="#000000"/><rect x="16" y="5" width="1" height="1" fill="#808080"/><rect x="2" y="6" width="1" height="1" fill="#000000"/><rect x="3" y="6" width="1" height="1" fill="#0000ff"/><rect x="4" y="6" width="1" height="1" fill="#000000"/><rect x="5" y="6" width="1" height="1" fill="#fffbe8"/><rect x="6" y="6" width="6" height="1" fill="#000000"/><rect x="12" y="6" width="1" height="1" fill="#fffbe8"/><rect x="13" y="6" width="1" height="1" fill="#000000"/><rect x="14" y="6" width="1" height="1" fill="#0000ff"/><rect x="15" y="6" width="1" height="1" fill="#000000"/><rect x="16" y="6" width="1" height="1" fill="#808080"/><rect x="2" y="7" width="1" height="1" fill="#000000"/><rect x="3" y="7" width="1" height="1" fill="#0000ff"/><rect x="4" y="7" width="1" height="1" fill="#000000"/><rect x="5" y="7" width="8" height="1" fill="#fffbe8"/><rect x="13" y="7" width="1" height="1" fill="#000000"/><rect x="14" y="7" width="1" height="1" fill="#0000ff"/><rect x="15" y="7" width="1" height="1" fill="#000000"/><rect x="16" y="7" width="1" height="1" fill="#808080"/><rect x="2" y="8" width="1" height="1" fill="#000000"/><rect x="3" y="8" width="1" height="1" fill="#0000ff"/><rect x="4" y="8" width="1" height="1" fill="#000000"/><rect x="5" y="8" width="8" height="1" fill="#fffbe8"/><rect x="13" y="8" width="1" height="1" fill="#000000"/><rect x="14" y="8" width="1" height="1" fill="#0000ff"/><rect x="15" y="8" width="1" height="1" fill="#000000"/><rect x="16" y="8" width="1" height="1" fill="#808080"/><rect x="2" y="9" width="1" height="1" fill="#000000"/><rect x="3" y="9" width="1" height="1" fill="#0000ff"/><rect x="4" y="9" width="10" height="1" fill="#000000"/><rect x="14" y="9" width="1" height="1" fill="#0000ff"/><rect x="15" y="9" width="1" height="1" fill="#000000"/><rect x="16" y="9" width="1" height="1" fill="#808080"/><rect x="2" y="10" width="1" height="1" fill="#000000"/><rect x="3" y="10" width="12" height="1" fill="#0000ff"/><rect x="15" y="10" width="1" height="1" fill="#000000"/><rect x="16" y="10" width="1" height="1" fill="#808080"/><rect x="2" y="11" width="1" height="1" fill="#000000"/><rect x="3" y="11" width="2" height="1" fill="#0000ff"/><rect x="5" y="11" width="9" height="1" fill="#000000"/><rect x="14" y="11" width="1" height="1" fill="#0000ff"/><rect x="15" y="11" width="1" height="1" fill="#000000"/><rect x="16" y="11" width="1" height="1" fill="#808080"/><rect x="2" y="12" width="1" height="1" fill="#000000"/><rect x="3" y="12" width="2" height="1" fill="#0000ff"/><rect x="5" y="12" width="1" height="1" fill="#000000"/><rect x="6" y="12" width="5" height="1" fill="#0000ff"/><rect x="11" y="12" width="2" height="1" fill="#e8e8e8"/><rect x="13" y="12" width="1" height="1" fill="#000000"/><rect x="14" y="12" width="1" height="1" fill="#0000ff"/><rect x="15" y="12" width="1" height="1" fill="#000000"/><rect x="16" y="12" width="1" height="1" fill="#808080"/><rect x="2" y="13" width="1" height="1" fill="#000000"/><rect x="3" y="13" width="2" height="1" fill="#0000ff"/><rect x="5" y="13" width="1" height="1" fill="#000000"/><rect x="6" y="13" width="5" height="1" fill="#0000ff"/><rect x="11" y="13" width="2" height="1" fill="#e8e8e8"/><rect x="13" y="13" width="1" height="1" fill="#000000"/><rect x="14" y="13" width="1" height="1" fill="#0000ff"/><rect x="15" y="13" width="1" height="1" fill="#000000"/><rect x="16" y="13" width="1" height="1" fill="#808080"/><rect x="2" y="14" width="1" height="1" fill="#000000"/><rect x="3" y="14" width="2" height="1" fill="#0000ff"/><rect x="5" y="14" width="1" height="1" fill="#000000"/><rect x="6" y="14" width="5" height="1" fill="#0000ff"/><rect x="11" y="14" width="2" height="1" fill="#e8e8e8"/><rect x="13" y="14" width="1" height="1" fill="#000000"/><rect x="14" y="14" width="1" height="1" fill="#0000ff"/><rect x="15" y="14" width="1" height="1" fill="#000000"/><rect x="16" y="14" width="1" height="1" fill="#808080"/><rect x="2" y="15" width="14" height="1" fill="#000000"/><rect x="16" y="15" width="1" height="1" fill="#808080"/><rect x="3" y="16" width="14" height="1" fill="#808080"/></svg>
<svg style="position:absolute;left:157px;top:32px" width="18" height="13" shape-rendering="crispEdges"><rect x="10" y="6" width="4" height="1" fill="#000080"/><rect x="4" y="7" width="1" height="1" fill="#000080"/><rect x="8" y="7" width="2" height="1" fill="#000080"/><rect x="14" y="7" width="1" height="1" fill="#000080"/><rect x="4" y="8" width="2" height="1" fill="#000080"/><rect x="7" y="8" width="1" height="1" fill="#000080"/><rect x="15" y="8" width="1" height="1" fill="#000080"/><rect x="4" y="9" width="3" height="1" fill="#000080"/><rect x="15" y="9" width="1" height="1" fill="#000080"/><rect x="4" y="10" width="4" height="1" fill="#000080"/><rect x="15" y="10" width="1" height="1" fill="#000080"/><rect x="4" y="11" width="5" height="1" fill="#000080"/><rect x="14" y="11" width="1" height="1" fill="#000080"/><rect x="14" y="12" width="1" height="1" fill="#000080"/></svg>
<svg style="position:absolute;left:192px;top:32px" width="20" height="20" shape-rendering="crispEdges"><rect x="7" y="1" width="10" height="1" fill="#000000"/><rect x="7" y="2" width="1" height="1" fill="#000000"/><rect x="8" y="2" width="7" height="1" fill="#8c8c8c"/><rect x="15" y="2" width="2" height="1" fill="#000000"/><rect x="7" y="3" width="1" height="1" fill="#000000"/><rect x="8" y="3" width="5" height="1" fill="#8c8c8c"/><rect x="13" y="3" width="2" height="1" fill="#000000"/><rect x="15" y="3" width="1" height="1" fill="#00a0a0"/><rect x="16" y="3" width="1" height="1" fill="#000000"/><rect x="6" y="4" width="2" height="1" fill="#000000"/><rect x="8" y="4" width="4" height="1" fill="#8c8c8c"/><rect x="12" y="4" width="1" height="1" fill="#000000"/><rect x="13" y="4" width="1" height="1" fill="#00f0f0"/><rect x="14" y="4" width="2" height="1" fill="#00a0a0"/><rect x="16" y="4" width="1" height="1" fill="#000000"/><rect x="6" y="5" width="2" height="1" fill="#000000"/><rect x="8" y="5" width="4" height="1" fill="#8c8c8c"/><rect x="12" y="5" width="1" height="1" fill="#000000"/><rect x="13" y="5" width="1" height="1" fill="#00f0f0"/><rect x="14" y="5" width="2" height="1" fill="#00a0a0"/><rect x="16" y="5" width="1" height="1" fill="#000000"/><rect x="1" y="6" width="6" height="1" fill="#000000"/><rect x="7" y="6" width="1" height="1" fill="#00f0f0"/><rect x="8" y="6" width="1" height="1" fill="#000000"/><rect x="9" y="6" width="3" height="1" fill="#8c8c8c"/><rect x="12" y="6" width="1" height="1" fill="#000000"/><rect x="13" y="6" width="1" height="1" fill="#00f0f0"/><rect x="14" y="6" width="2" height="1" fill="#00a0a0"/><rect x="16" y="6" width="1" height="1" fill="#000000"/><rect x="1" y="7" width="1" height="1" fill="#000000"/><rect x="2" y="7" width="7" height="1" fill="#00f0f0"/><rect x="9" y="7" width="1" height="1" fill="#000000"/><rect x="10" y="7" width="2" height="1" fill="#8c8c8c"/><rect x="12" y="7" width="1" height="1" fill="#000000"/><rect x="13" y="7" width="1" height="1" fill="#00f0f0"/><rect x="14" y="7" width="2" height="1" fill="#00a0a0"/><rect x="16" y="7" width="1" height="1" fill="#000000"/><rect x="1" y="8" width="1" height="1" fill="#000000"/><rect x="2" y="8" width="8" height="1" fill="#00f0f0"/><rect x="10" y="8" width="1" height="1" fill="#000000"/><rect x="11" y="8" width="1" height="1" fill="#8c8c8c"/><rect x="12" y="8" width="1" height="1" fill="#000000"/><rect x="13" y="8" width="1" height="1" fill="#00f0f0"/><rect x="14" y="8" width="2" height="1" fill="#00a0a0"/><rect x="16" y="8" width="1" height="1" fill="#000000"/><rect x="1" y="9" width="1" height="1" fill="#000000"/><rect x="2" y="9" width="7" height="1" fill="#00f0f0"/><rect x="9" y="9" width="1" height="1" fill="#000000"/><rect x="10" y="9" width="2" height="1" fill="#8c8c8c"/><rect x="12" y="9" width="1" height="1" fill="#000000"/><rect x="13" y="9" width="1" height="1" fill="#00f0f0"/><rect x="14" y="9" width="2" height="1" fill="#00a0a0"/><rect x="16" y="9" width="1" height="1" fill="#000000"/><rect x="1" y="10" width="6" height="1" fill="#000000"/><rect x="7" y="10" width="1" height="1" fill="#00f0f0"/><rect x="8" y="10" width="1" height="1" fill="#000000"/><rect x="9" y="10" width="3" height="1" fill="#8c8c8c"/><rect x="12" y="10" width="1" height="1" fill="#000000"/><rect x="13" y="10" width="1" height="1" fill="#00f0f0"/><rect x="14" y="10" width="1" height="1" fill="#ffffff"/><rect x="15" y="10" width="1" height="1" fill="#00a0a0"/><rect x="16" y="10" width="1" height="1" fill="#000000"/><rect x="6" y="11" width="2" height="1" fill="#000000"/><rect x="8" y="11" width="4" height="1" fill="#8c8c8c"/><rect x="12" y="11" width="1" height="1" fill="#000000"/><rect x="13" y="11" width="1" height="1" fill="#00f0f0"/><rect x="14" y="11" width="1" height="1" fill="#000000"/><rect x="15" y="11" width="1" height="1" fill="#00a0a0"/><rect x="16" y="11" width="1" height="1" fill="#000000"/><rect x="6" y="12" width="2" height="1" fill="#000000"/><rect x="8" y="12" width="4" height="1" fill="#8c8c8c"/><rect x="12" y="12" width="1" height="1" fill="#000000"/><rect x="13" y="12" width="1" height="1" fill="#00f0f0"/><rect x="14" y="12" width="2" height="1" fill="#00a0a0"/><rect x="16" y="12" width="1" height="1" fill="#000000"/><rect x="7" y="13" width="1" height="1" fill="#000000"/><rect x="8" y="13" width="4" height="1" fill="#8c8c8c"/><rect x="12" y="13" width="1" height="1" fill="#000000"/><rect x="13" y="13" width="1" height="1" fill="#00f0f0"/><rect x="14" y="13" width="2" height="1" fill="#00a0a0"/><rect x="16" y="13" width="1" height="1" fill="#000000"/><rect x="7" y="14" width="1" height="1" fill="#000000"/><rect x="8" y="14" width="4" height="1" fill="#8c8c8c"/><rect x="12" y="14" width="1" height="1" fill="#000000"/><rect x="13" y="14" width="1" height="1" fill="#00f0f0"/><rect x="14" y="14" width="2" height="1" fill="#00a0a0"/><rect x="16" y="14" width="1" height="1" fill="#000000"/><rect x="0" y="15" width="8" height="1" fill="#000000"/><rect x="12" y="15" width="1" height="1" fill="#000000"/><rect x="13" y="15" width="1" height="1" fill="#00f0f0"/><rect x="14" y="15" width="2" height="1" fill="#00a0a0"/><rect x="16" y="15" width="4" height="1" fill="#000000"/><rect x="12" y="16" width="1" height="1" fill="#000000"/><rect x="13" y="16" width="1" height="1" fill="#00f0f0"/><rect x="14" y="16" width="2" height="1" fill="#00a0a0"/><rect x="16" y="16" width="1" height="1" fill="#000000"/><rect x="12" y="17" width="1" height="1" fill="#000000"/><rect x="13" y="17" width="1" height="1" fill="#00f0f0"/><rect x="14" y="17" width="1" height="1" fill="#00a0a0"/><rect x="15" y="17" width="2" height="1" fill="#000000"/><rect x="12" y="18" width="1" height="1" fill="#000000"/><rect x="13" y="18" width="1" height="1" fill="#00f0f0"/><rect x="14" y="18" width="2" height="1" fill="#000000"/><rect x="12" y="19" width="2" height="1" fill="#000000"/></svg>
<svg style="position:absolute;left:221px;top:191px" width="20" height="20" shape-rendering="crispEdges"><rect x="3" y="3" width="1" height="1" fill="#ffff00"/><rect x="7" y="3" width="1" height="1" fill="#ffff00"/><rect x="10" y="3" width="4" height="1" fill="#000000"/><rect x="4" y="4" width="1" height="1" fill="#ffff00"/><rect x="7" y="4" width="1" height="1" fill="#ffff00"/><rect x="9" y="4" width="1" height="1" fill="#000000"/><rect x="10" y="4" width="1" height="1" fill="#ffff00"/><rect x="11" y="4" width="2" height="1" fill="#fffbe8"/><rect x="13" y="4" width="2" height="1" fill="#000000"/><rect x="5" y="5" width="1" height="1" fill="#ffff00"/><rect x="7" y="5" width="1" height="1" fill="#ffff00"/><rect x="8" y="5" width="1" height="1" fill="#000000"/><rect x="9" y="5" width="1" height="1" fill="#ffff00"/><rect x="10" y="5" width="3" height="1" fill="#fffbe8"/><rect x="13" y="5" width="1" height="1" fill="#000000"/><rect x="14" y="5" width="1" height="1" fill="#fffbe8"/><rect x="15" y="5" width="1" height="1" fill="#000000"/><rect x="3" y="6" width="6" height="1" fill="#ffff00"/><rect x="9" y="6" width="4" height="1" fill="#fffbe8"/><rect x="13" y="6" width="4" height="1" fill="#000000"/><rect x="6" y="7" width="1" height="1" fill="#000000"/><rect x="7" y="7" width="2" height="1" fill="#ffff00"/><rect x="9" y="7" width="8" height="1" fill="#fffbe8"/><rect x="17" y="7" width="1" height="1" fill="#000000"/><rect x="6" y="8" width="1" height="1" fill="#000000"/><rect x="7" y="8" width="2" height="1" fill="#fffbe8"/><rect x="9" y="8" width="3" height="1" fill="#000000"/><rect x="12" y="8" width="5" height="1" fill="#fffbe8"/><rect x="17" y="8" width="1" height="1" fill="#000000"/><rect x="18" y="8" width="1" height="1" fill="#808080"/><rect x="3" y="9" width="1" height="1" fill="#808080"/><rect x="6" y="9" width="1" height="1" fill="#000000"/><rect x="7" y="9" width="1" height="1" fill="#ffff00"/><rect x="8" y="9" width="9" height="1" fill="#fffbe8"/><rect x="17" y="9" width="1" height="1" fill="#000000"/><rect x="18" y="9" width="1" height="1" fill="#808080"/><rect x="6" y="10" width="1" height="1" fill="#000000"/><rect x="7" y="10" width="1" height="1" fill="#fffbe8"/><rect x="8" y="10" width="7" height="1" fill="#000000"/><rect x="15" y="10" width="2" height="1" fill="#fffbe8"/><rect x="17" y="10" width="1" height="1" fill="#000000"/><rect x="18" y="10" width="1" height="1" fill="#808080"/><rect x="6" y="11" width="1" height="1" fill="#000000"/><rect x="7" y="11" width="10" height="1" fill="#fffbe8"/><rect x="17" y="11" width="1" height="1" fill="#000000"/><rect x="18" y="11" width="1" height="1" fill="#808080"/><rect x="6" y="12" width="1" height="1" fill="#000000"/><rect x="7" y="12" width="1" height="1" fill="#fffbe8"/><rect x="8" y="12" width="7" height="1" fill="#000000"/><rect x="15" y="12" width="2" height="1" fill="#fffbe8"/><rect x="17" y="12" width="1" height="1" fill="#000000"/><rect x="18" y="12" width="1" height="1" fill="#808080"/><rect x="6" y="13" width="1" height="1" fill="#000000"/><rect x="7" y="13" width="10" height="1" fill="#fffbe8"/><rect x="17" y="13" width="1" height="1" fill="#000000"/><rect x="18" y="13" width="1" height="1" fill="#808080"/><rect x="6" y="14" width="1" height="1" fill="#000000"/><rect x="7" y="14" width="1" height="1" fill="#fffbe8"/><rect x="8" y="14" width="7" height="1" fill="#000000"/><rect x="15" y="14" width="2" height="1" fill="#fffbe8"/><rect x="17" y="14" width="1" height="1" fill="#000000"/><rect x="18" y="14" width="1" height="1" fill="#808080"/><rect x="6" y="15" width="1" height="1" fill="#000000"/><rect x="7" y="15" width="10" height="1" fill="#fffbe8"/><rect x="17" y="15" width="1" height="1" fill="#000000"/><rect x="18" y="15" width="1" height="1" fill="#808080"/><rect x="6" y="16" width="1" height="1" fill="#000000"/><rect x="7" y="16" width="10" height="1" fill="#fffbe8"/><rect x="17" y="16" width="1" height="1" fill="#000000"/><rect x="18" y="16" width="1" height="1" fill="#808080"/><rect x="6" y="17" width="12" height="1" fill="#000000"/><rect x="18" y="17" width="1" height="1" fill="#808080"/><rect x="7" y="18" width="12" height="1" fill="#808080"/></svg>
<svg style="position:absolute;left:247px;top:192px" width="24" height="20" shape-rendering="crispEdges"><rect x="18" y="1" width="3" height="1" fill="#808080"/><rect x="2" y="2" width="9" height="1" fill="#808080"/><rect x="17" y="2" width="1" height="1" fill="#808080"/><rect x="18" y="2" width="3" height="1" fill="#ffffff"/><rect x="21" y="2" width="1" height="1" fill="#808080"/><rect x="2" y="3" width="1" height="1" fill="#808080"/><rect x="3" y="3" width="8" height="1" fill="#ffffff"/><rect x="11" y="3" width="1" height="1" fill="#808080"/><rect x="12" y="3" width="3" height="1" fill="#ffffff"/><rect x="17" y="3" width="1" height="1" fill="#808080"/><rect x="18" y="3" width="1" height="1" fill="#ffffff"/><rect x="19" y="3" width="1" height="1" fill="#808080"/><rect x="20" y="3" width="1" height="1" fill="#ffffff"/><rect x="21" y="3" width="3" height="1" fill="#808080"/><rect x="2" y="4" width="1" height="1" fill="#808080"/><rect x="3" y="4" width="9" height="1" fill="#ffffff"/><rect x="12" y="4" width="1" height="1" fill="#808080"/><rect x="13" y="4" width="2" height="1" fill="#ffffff"/><rect x="16" y="4" width="1" height="1" fill="#808080"/><rect x="17" y="4" width="1" height="1" fill="#ffffff"/><rect x="18" y="4" width="1" height="1" fill="#808080"/><rect x="19" y="4" width="1" height="1" fill="#b4b4b4"/><rect x="20" y="4" width="1" height="1" fill="#fbf7e8"/><rect x="21" y="4" width="2" height="1" fill="#808080"/><rect x="2" y="5" width="1" height="1" fill="#808080"/><rect x="3" y="5" width="1" height="1" fill="#ffffff"/><rect x="4" y="5" width="5" height="1" fill="#808080"/><rect x="9" y="5" width="2" height="1" fill="#ffffff"/><rect x="11" y="5" width="1" height="1" fill="#808080"/><rect x="12" y="5" width="1" height="1" fill="#ffffff"/><rect x="13" y="5" width="1" height="1" fill="#808080"/><rect x="14" y="5" width="1" height="1" fill="#ffffff"/><rect x="15" y="5" width="1" height="1" fill="#808080"/><rect x="16" y="5" width="1" height="1" fill="#ffffff"/><rect x="17" y="5" width="2" height="1" fill="#808080"/><rect x="19" y="5" width="1" height="1" fill="#fbf7e8"/><rect x="20" y="5" width="3" height="1" fill="#808080"/><rect x="2" y="6" width="1" height="1" fill="#808080"/><rect x="3" y="6" width="8" height="1" fill="#ffffff"/><rect x="11" y="6" width="4" height="1" fill="#808080"/><rect x="15" y="6" width="1" height="1" fill="#ffffff"/><rect x="16" y="6" width="1" height="1" fill="#808080"/><rect x="17" y="6" width="1" height="1" fill="#b4b4b4"/><rect x="18" y="6" width="1" height="1" fill="#fbf7e8"/><rect x="19" y="6" width="3" height="1" fill="#808080"/><rect x="2" y="7" width="1" height="1" fill="#808080"/><rect x="3" y="7" width="1" height="1" fill="#ffffff"/><rect x="4" y="7" width="5" height="1" fill="#808080"/><rect x="9" y="7" width="4" height="1" fill="#ffffff"/><rect x="13" y="7" width="1" height="1" fill="#808080"/><rect x="14" y="7" width="1" height="1" fill="#ffffff"/><rect x="15" y="7" width="2" height="1" fill="#808080"/><rect x="17" y="7" width="1" height="1" fill="#fbf7e8"/><rect x="18" y="7" width="2" height="1" fill="#808080"/><rect x="2" y="8" width="1" height="1" fill="#808080"/><rect x="3" y="8" width="9" height="1" fill="#ffffff"/><rect x="12" y="8" width="1" height="1" fill="#808080"/><rect x="13" y="8" width="1" height="1" fill="#ffffff"/><rect x="14" y="8" width="1" height="1" fill="#808080"/><rect x="15" y="8" width="1" height="1" fill="#b4b4b4"/><rect x="16" y="8" width="1" height="1" fill="#fbf7e8"/><rect x="17" y="8" width="2" height="1" fill="#808080"/><rect x="2" y="9" width="1" height="1" fill="#808080"/><rect x="3" y="9" width="1" height="1" fill="#ffffff"/><rect x="4" y="9" width="4" height="1" fill="#808080"/><rect x="8" y="9" width="3" height="1" fill="#ffffff"/><rect x="11" y="9" width="1" height="1" fill="#808080"/><rect x="12" y="9" width="1" height="1" fill="#ffffff"/><rect x="13" y="9" width="2" height="1" fill="#808080"/><rect x="15" y="9" width="1" height="1" fill="#fbf7e8"/><rect x="16" y="9" width="2" height="1" fill="#808080"/><rect x="2" y="10" width="1" height="1" fill="#808080"/><rect x="3" y="10" width="7" height="1" fill="#ffffff"/><rect x="10" y="10" width="1" height="1" fill="#808080"/><rect x="11" y="10" width="1" height="1" fill="#ffffff"/><rect x="12" y="10" width="1" height="1" fill="#808080"/><rect x="13" y="10" width="1" height="1" fill="#b4b4b4"/><rect x="14" y="10" width="1" height="1" fill="#fbf7e8"/><rect x="15" y="10" width="2" height="1" fill="#808080"/><rect x="2" y="11" width="1" height="1" fill="#808080"/><rect x="3" y="11" width="1" height="1" fill="#ffffff"/><rect x="4" y="11" width="3" height="1" fill="#808080"/><rect x="7" y="11" width="2" height="1" fill="#ffffff"/><rect x="9" y="11" width="1" height="1" fill="#808080"/><rect x="10" y="11" width="1" height="1" fill="#ffffff"/><rect x="11" y="11" width="2" height="1" fill="#808080"/><rect x="13" y="11" width="1" height="1" fill="#fbf7e8"/><rect x="14" y="11" width="3" height="1" fill="#808080"/><rect x="2" y="12" width="1" height="1" fill="#808080"/><rect x="3" y="12" width="4" height="1" fill="#ffffff"/><rect x="7" y="12" width="2" height="1" fill="#808080"/><rect x="9" y="12" width="1" height="1" fill="#ffffff"/><rect x="10" y="12" width="1" height="1" fill="#808080"/><rect x="11" y="12" width="1" height="1" fill="#b4b4b4"/><rect x="12" y="12" width="1" height="1" fill="#fbf7e8"/><rect x="13" y="12" width="4" height="1" fill="#808080"/><rect x="2" y="13" width="1" height="1" fill="#808080"/><rect x="3" y="13" width="1" height="1" fill="#ffffff"/><rect x="4" y="13" width="4" height="1" fill="#808080"/><rect x="8" y="13" width="1" height="1" fill="#ffffff"/><rect x="9" y="13" width="2" height="1" fill="#808080"/><rect x="11" y="13" width="1" height="1" fill="#fbf7e8"/><rect x="12" y="13" width="2" height="1" fill="#808080"/><rect x="14" y="13" width="1" height="1" fill="#ffffff"/><rect x="15" y="13" width="2" height="1" fill="#808080"/><rect x="2" y="14" width="1" height="1" fill="#808080"/><rect x="3" y="14" width="4" height="1" fill="#ffffff"/><rect x="7" y="14" width="1" height="1" fill="#808080"/><rect x="8" y="14" width="2" height="1" fill="#fbf7e8"/><rect x="10" y="14" width="2" height="1" fill="#808080"/><rect x="12" y="14" width="3" height="1" fill="#ffffff"/><rect x="15" y="14" width="2" height="1" fill="#808080"/><rect x="2" y="15" width="1" height="1" fill="#808080"/><rect x="3" y="15" width="1" height="1" fill="#ffffff"/><rect x="4" y="15" width="8" height="1" fill="#808080"/><rect x="12" y="15" width="3" height="1" fill="#ffffff"/><rect x="15" y="15" width="2" height="1" fill="#808080"/><rect x="2" y="16" width="1" height="1" fill="#808080"/><rect x="3" y="16" width="12" height="1" fill="#ffffff"/><rect x="15" y="16" width="2" height="1" fill="#808080"/><rect x="2" y="17" width="15" height="1" fill="#808080"/><rect x="3" y="18" width="14" height="1" fill="#808080"/></svg>
<svg style="position:absolute;left:276px;top:192px" width="19" height="17" shape-rendering="crispEdges"><rect x="3" y="3" width="3" height="1" fill="#ff0000"/><rect x="15" y="3" width="1" height="1" fill="#ff0000"/><rect x="3" y="4" width="4" height="1" fill="#ff0000"/><rect x="14" y="4" width="1" height="1" fill="#ff0000"/><rect x="15" y="4" width="1" height="1" fill="#000000"/><rect x="3" y="5" width="1" height="1" fill="#000000"/><rect x="4" y="5" width="4" height="1" fill="#ff0000"/><rect x="13" y="5" width="1" height="1" fill="#ff0000"/><rect x="14" y="5" width="1" height="1" fill="#000000"/><rect x="4" y="6" width="2" height="1" fill="#000000"/><rect x="6" y="6" width="3" height="1" fill="#ff0000"/><rect x="12" y="6" width="1" height="1" fill="#ff0000"/><rect x="13" y="6" width="1" height="1" fill="#000000"/><rect x="6" y="7" width="1" height="1" fill="#000000"/><rect x="7" y="7" width="3" height="1" fill="#ff0000"/><rect x="11" y="7" width="1" height="1" fill="#ff0000"/><rect x="12" y="7" width="1" height="1" fill="#000000"/><rect x="7" y="8" width="1" height="1" fill="#000000"/><rect x="8" y="8" width="4" height="1" fill="#ff0000"/><rect x="12" y="8" width="1" height="1" fill="#000000"/><rect x="8" y="9" width="4" height="1" fill="#ff0000"/><rect x="7" y="10" width="3" height="1" fill="#ff0000"/><rect x="10" y="10" width="1" height="1" fill="#000000"/><rect x="11" y="10" width="2" height="1" fill="#ff0000"/><rect x="6" y="11" width="3" height="1" fill="#ff0000"/><rect x="9" y="11" width="1" height="1" fill="#000000"/><rect x="12" y="11" width="2" height="1" fill="#ff0000"/><rect x="5" y="12" width="3" height="1" fill="#ff0000"/><rect x="8" y="12" width="1" height="1" fill="#000000"/><rect x="13" y="12" width="1" height="1" fill="#000000"/><rect x="14" y="12" width="1" height="1" fill="#ff0000"/><rect x="4" y="13" width="3" height="1" fill="#ff0000"/><rect x="7" y="13" width="1" height="1" fill="#000000"/><rect x="14" y="13" width="1" height="1" fill="#000000"/><rect x="15" y="13" width="1" height="1" fill="#ff0000"/><rect x="3" y="14" width="3" height="1" fill="#ff0000"/><rect x="6" y="14" width="1" height="1" fill="#000000"/><rect x="15" y="14" width="1" height="1" fill="#000000"/><rect x="16" y="14" width="1" height="1" fill="#ff0000"/><rect x="3" y="15" width="2" height="1" fill="#ff0000"/><rect x="5" y="15" width="1" height="1" fill="#000000"/><rect x="16" y="15" width="1" height="1" fill="#ff0000"/><rect x="4" y="16" width="1" height="1" fill="#000000"/><rect x="15" y="16" width="2" height="1" fill="#000000"/></svg>
<svg style="position:absolute;left:311px;top:192px" width="19" height="18" shape-rendering="crispEdges"><rect x="2" y="2" width="14" height="1" fill="#808080"/><rect x="2" y="3" width="1" height="1" fill="#808080"/><rect x="3" y="3" width="1" height="1" fill="#ffffff"/><rect x="4" y="3" width="1" height="1" fill="#808080"/><rect x="5" y="3" width="8" height="1" fill="#ffffff"/><rect x="13" y="3" width="1" height="1" fill="#808080"/><rect x="14" y="3" width="1" height="1" fill="#ffffff"/><rect x="15" y="3" width="1" height="1" fill="#808080"/><rect x="16" y="3" width="1" height="1" fill="#ffffff"/><rect x="2" y="4" width="1" height="1" fill="#808080"/><rect x="3" y="4" width="1" height="1" fill="#ffffff"/><rect x="4" y="4" width="1" height="1" fill="#808080"/><rect x="5" y="4" width="1" height="1" fill="#ffffff"/><rect x="6" y="4" width="6" height="1" fill="#808080"/><rect x="13" y="4" width="1" height="1" fill="#808080"/><rect x="14" y="4" width="1" height="1" fill="#ffffff"/><rect x="15" y="4" width="1" height="1" fill="#808080"/><rect x="16" y="4" width="1" height="1" fill="#ffffff"/><rect x="2" y="5" width="1" height="1" fill="#808080"/><rect x="3" y="5" width="1" height="1" fill="#ffffff"/><rect x="4" y="5" width="1" height="1" fill="#808080"/><rect x="5" y="5" width="1" height="1" fill="#ffffff"/><rect x="7" y="5" width="6" height="1" fill="#ffffff"/><rect x="13" y="5" width="1" height="1" fill="#808080"/><rect x="14" y="5" width="1" height="1" fill="#ffffff"/><rect x="15" y="5" width="1" height="1" fill="#808080"/><rect x="16" y="5" width="1" height="1" fill="#ffffff"/><rect x="2" y="6" width="1" height="1" fill="#808080"/><rect x="3" y="6" width="1" height="1" fill="#ffffff"/><rect x="4" y="6" width="1" height="1" fill="#808080"/><rect x="5" y="6" width="1" height="1" fill="#ffffff"/><rect x="6" y="6" width="6" height="1" fill="#808080"/><rect x="13" y="6" width="1" height="1" fill="#808080"/><rect x="14" y="6" width="1" height="1" fill="#ffffff"/><rect x="15" y="6" width="1" height="1" fill="#808080"/><rect x="16" y="6" width="1" height="1" fill="#ffffff"/><rect x="2" y="7" width="1" height="1" fill="#808080"/><rect x="3" y="7" width="1" height="1" fill="#ffffff"/><rect x="4" y="7" width="1" height="1" fill="#808080"/><rect x="5" y="7" width="1" height="1" fill="#ffffff"/><rect x="7" y="7" width="6" height="1" fill="#ffffff"/><rect x="13" y="7" width="1" height="1" fill="#808080"/><rect x="14" y="7" width="1" height="1" fill="#ffffff"/><rect x="15" y="7" width="1" height="1" fill="#808080"/><rect x="16" y="7" width="1" height="1" fill="#ffffff"/><rect x="2" y="8" width="1" height="1" fill="#808080"/><rect x="3" y="8" width="1" height="1" fill="#ffffff"/><rect x="4" y="8" width="1" height="1" fill="#808080"/><rect x="5" y="8" width="1" height="1" fill="#ffffff"/><rect x="13" y="8" width="1" height="1" fill="#808080"/><rect x="14" y="8" width="1" height="1" fill="#ffffff"/><rect x="15" y="8" width="1" height="1" fill="#808080"/><rect x="16" y="8" width="1" height="1" fill="#ffffff"/><rect x="2" y="9" width="1" height="1" fill="#808080"/><rect x="3" y="9" width="1" height="1" fill="#ffffff"/><rect x="4" y="9" width="10" height="1" fill="#808080"/><rect x="14" y="9" width="1" height="1" fill="#ffffff"/><rect x="15" y="9" width="1" height="1" fill="#808080"/><rect x="16" y="9" width="1" height="1" fill="#ffffff"/><rect x="2" y="10" width="1" height="1" fill="#808080"/><rect x="3" y="10" width="1" height="1" fill="#ffffff"/><rect x="5" y="10" width="10" height="1" fill="#ffffff"/><rect x="15" y="10" width="1" height="1" fill="#808080"/><rect x="16" y="10" width="1" height="1" fill="#ffffff"/><rect x="2" y="11" width="1" height="1" fill="#808080"/><rect x="3" y="11" width="1" height="1" fill="#ffffff"/><rect x="5" y="11" width="9" height="1" fill="#808080"/><rect x="15" y="11" width="1" height="1" fill="#808080"/><rect x="16" y="11" width="1" height="1" fill="#ffffff"/><rect x="2" y="12" width="1" height="1" fill="#808080"/><rect x="3" y="12" width="1" height="1" fill="#ffffff"/><rect x="5" y="12" width="1" height="1" fill="#808080"/><rect x="6" y="12" width="7" height="1" fill="#ffffff"/><rect x="13" y="12" width="1" height="1" fill="#808080"/><rect x="14" y="12" width="1" height="1" fill="#ffffff"/><rect x="15" y="12" width="1" height="1" fill="#808080"/><rect x="16" y="12" width="1" height="1" fill="#ffffff"/><rect x="2" y="13" width="1" height="1" fill="#808080"/><rect x="3" y="13" width="1" height="1" fill="#ffffff"/><rect x="5" y="13" width="1" height="1" fill="#808080"/><rect x="6" y="13" width="1" height="1" fill="#ffffff"/><rect x="13" y="13" width="1" height="1" fill="#808080"/><rect x="14" y="13" width="1" height="1" fill="#ffffff"/><rect x="15" y="13" width="1" height="1" fill="#808080"/><rect x="16" y="13" width="1" height="1" fill="#ffffff"/><rect x="2" y="14" width="1" height="1" fill="#808080"/><rect x="3" y="14" width="1" height="1" fill="#ffffff"/><rect x="5" y="14" width="1" height="1" fill="#808080"/><rect x="6" y="14" width="1" height="1" fill="#ffffff"/><rect x="13" y="14" width="1" height="1" fill="#808080"/><rect x="14" y="14" width="1" height="1" fill="#ffffff"/><rect x="15" y="14" width="1" height="1" fill="#808080"/><rect x="16" y="14" width="1" height="1" fill="#ffffff"/><rect x="2" y="15" width="14" height="1" fill="#808080"/><rect x="16" y="15" width="1" height="1" fill="#ffffff"/><rect x="3" y="16" width="14" height="1" fill="#ffffff"/></svg>
<svg style="position:absolute;left:338px;top:192px" width="19" height="14" shape-rendering="crispEdges"><rect x="10" y="6" width="4" height="1" fill="#808080"/><rect x="4" y="7" width="1" height="1" fill="#808080"/><rect x="8" y="7" width="2" height="1" fill="#808080"/><rect x="11" y="7" width="3" height="1" fill="#ffffff"/><rect x="14" y="7" width="1" height="1" fill="#808080"/><rect x="4" y="8" width="2" height="1" fill="#808080"/><rect x="7" y="8" width="1" height="1" fill="#808080"/><rect x="9" y="8" width="2" height="1" fill="#ffffff"/><rect x="15" y="8" width="1" height="1" fill="#808080"/><rect x="4" y="9" width="3" height="1" fill="#808080"/><rect x="8" y="9" width="1" height="1" fill="#ffffff"/><rect x="15" y="9" width="1" height="1" fill="#808080"/><rect x="16" y="9" width="1" height="1" fill="#ffffff"/><rect x="4" y="10" width="4" height="1" fill="#808080"/><rect x="15" y="10" width="1" height="1" fill="#808080"/><rect x="16" y="10" width="1" height="1" fill="#ffffff"/><rect x="4" y="11" width="5" height="1" fill="#808080"/><rect x="14" y="11" width="1" height="1" fill="#808080"/><rect x="16" y="11" width="1" height="1" fill="#ffffff"/><rect x="5" y="12" width="5" height="1" fill="#ffffff"/><rect x="14" y="12" width="1" height="1" fill="#808080"/><rect x="15" y="12" width="1" height="1" fill="#ffffff"/><rect x="15" y="13" width="1" height="1" fill="#ffffff"/></svg>
<div class="t" style="left:24px;top:8px;font:bold 14px 'Liberation Sans';line-height:16px;color:#fff;letter-spacing:-0.629px;white-space:pre;text-shadow:1px 1px 0 #0c2a8c">Inclusão/Alteração de Cupons Fiscais</div>
<div class="t" style="left:219px;top:52px;font:11px 'Liberation Sans';line-height:13px;color:#000;letter-spacing:-0.179px;white-space:pre;">Identificação do Cupom Fiscal</div>
<div class="t" style="left:217px;top:75px;font:11px 'Liberation Sans';line-height:13px;color:#000;letter-spacing:-0.389px;white-space:pre;">Número Cupom Fiscal</div>
<div class="t" style="left:217px;top:106px;font:11px 'Liberation Sans';line-height:13px;color:#000;letter-spacing:-0.250px;white-space:pre;">Série</div>
<div class="t" style="left:216px;top:140px;font:11px 'Liberation Sans';line-height:13px;color:#000;letter-spacing:-0.471px;white-space:pre;">Número Máquina PDV</div>
<div class="t" style="left:435px;top:75px;font:11px 'Liberation Sans';line-height:13px;color:#000;letter-spacing:-0.364px;white-space:pre;">Data Emissão</div>
<div class="t" style="left:435px;top:106px;font:11px 'Liberation Sans';line-height:13px;color:#000;letter-spacing:-1.000px;white-space:pre;">CFOP</div>
<div class="t" style="left:334px;top:75px;font:11px 'Liberation Sans';line-height:13px;color:#aca899;letter-spacing:0.000px;white-space:pre;">0</div>
<div class="t" style="left:522px;top:73px;font:12px 'Liberation Sans';line-height:14px;color:#aca899;letter-spacing:0.000px;white-space:pre;">/</div>
<div class="t" style="left:532px;top:73px;font:12px 'Liberation Sans';line-height:14px;color:#aca899;letter-spacing:0.000px;white-space:pre;">/</div>
<div class="t" style="left:683px;top:72px;font:12px 'Liberation Sans';line-height:14px;color:#000;letter-spacing:-0.667px;white-space:pre;">NF-e</div>
<div class="t" style="left:219px;top:168px;font:11px 'Liberation Sans';line-height:13px;color:#000;letter-spacing:-0.286px;white-space:pre;">Pesquisa</div>
<div class="t" style="left:276px;top:168px;font:11px 'Liberation Sans';line-height:13px;color:#000;letter-spacing:-0.333px;white-space:pre;">Capa</div>
<div class="t" style="left:314px;top:166px;font:11px 'Liberation Sans';line-height:13px;color:#000;letter-spacing:0.167px;white-space:pre;">Item/Impostos</div>
<div class="t" style="left:401px;top:198px;font:11px 'Liberation Sans';line-height:13px;color:#000;letter-spacing:-0.300px;white-space:pre;">Número Item</div>
<div class="t" style="left:217px;top:237px;font:11px 'Liberation Sans';line-height:13px;color:#000;letter-spacing:-0.125px;white-space:pre;">Código do Produto</div>
<div class="t" style="left:217px;top:261px;font:11px 'Liberation Sans';line-height:13px;color:#000;letter-spacing:-0.250px;white-space:pre;">Unidade de Medida</div>
<div class="t" style="left:217px;top:284px;font:11px 'Liberation Sans';line-height:13px;color:#000;letter-spacing:-0.154px;white-space:pre;">Preço Unitário</div>
<div class="t" style="left:217px;top:307px;font:11px 'Liberation Sans';line-height:13px;color:#000;letter-spacing:-0.143px;white-space:pre;">Desconto</div>
<div class="t" style="left:217px;top:331px;font:11px 'Liberation Sans';line-height:13px;color:#000;letter-spacing:-0.111px;white-space:pre;">Sit.Trib.ICMS (A/B)</div>
<div class="t" style="left:404px;top:332px;font:11px 'Liberation Sans';line-height:13px;color:#000;letter-spacing:-0.062px;white-space:pre;">Cod.grupo Produto</div>
<div class="t" style="left:216px;top:356px;font:11px 'Liberation Sans';line-height:13px;color:#000;letter-spacing:-0.250px;white-space:pre;">Situação Trib PIS</div>
<div class="t" style="left:372px;top:356px;font:11px 'Liberation Sans';line-height:13px;color:#000;letter-spacing:-0.263px;white-space:pre;">Situação Trib COFINS</div>
<div class="t" style="left:559px;top:261px;font:11px 'Liberation Sans';line-height:13px;color:#000;letter-spacing:-1.000px;white-space:pre;">NCM</div>
<div class="t" style="left:560px;top:284px;font:11px 'Liberation Sans';line-height:13px;color:#000;letter-spacing:-0.222px;white-space:pre;">Quantidade</div>
<div class="t" style="left:560px;top:307px;font:11px 'Liberation Sans';line-height:13px;color:#000;letter-spacing:-0.111px;white-space:pre;">Valor Item</div>
<div class="t" style="left:560px;top:331px;font:11px 'Liberation Sans';line-height:13px;color:#000;letter-spacing:-0.417px;white-space:pre;">Valor Líquido</div>
<div class="t" style="left:557px;top:357px;font:11px 'Liberation Sans';line-height:13px;color:#000;letter-spacing:0.000px;white-space:pre;">Conta Contábil</div>
<div class="t" style="left:461px;top:231px;font:bold 12px 'Liberation Sans';line-height:14px;color:#000;letter-spacing:0.000px;white-space:pre;">?</div>
<div class="t" style="left:422px;top:280px;font:11px 'Liberation Sans';line-height:13px;color:#aca899;letter-spacing:0.000px;white-space:pre;">0,0000000</div>
<div class="t" style="left:712px;top:280px;font:11px 'Liberation Sans';line-height:13px;color:#aca899;letter-spacing:0.000px;white-space:pre;">0,000</div>
<div class="t" style="left:453px;top:303px;font:11px 'Liberation Sans';line-height:13px;color:#aca899;letter-spacing:0.000px;white-space:pre;">0,00</div>
<div class="t" style="left:718px;top:303px;font:11px 'Liberation Sans';line-height:13px;color:#aca899;letter-spacing:0.000px;white-space:pre;">0,00</div>
<div class="t" style="left:340px;top:326px;font:bold 12px 'Liberation Sans';line-height:14px;color:#000;letter-spacing:0.000px;white-space:pre;">?</div>
<div class="t" style="left:388px;top:326px;font:bold 12px 'Liberation Sans';line-height:14px;color:#000;letter-spacing:0.000px;white-space:pre;">?</div>
<div class="t" style="left:718px;top:328px;font:11px 'Liberation Sans';line-height:13px;color:#aca899;letter-spacing:0.000px;white-space:pre;">0,00</div>
<div class="t" style="left:403px;top:379px;font:11px 'Liberation Sans';line-height:13px;color:#aca899;letter-spacing:-0.107px;white-space:pre;">Impostos Relacionados ao Item</div>
<div class="t" style="left:240px;top:397px;font:11px 'Liberation Sans';line-height:13px;color:#aca899;letter-spacing:0.167px;white-space:pre;">Imposto</div>
<div class="t" style="left:295px;top:397px;font:11px 'Liberation Sans';line-height:13px;color:#aca899;letter-spacing:-0.111px;white-space:pre;">Lançamento</div>
<div class="t" style="left:379px;top:397px;font:11px 'Liberation Sans';line-height:13px;color:#aca899;letter-spacing:-0.455px;white-space:pre;">Base Cálculo</div>
<div class="t" style="left:450px;top:397px;font:11px 'Liberation Sans';line-height:13px;color:#aca899;letter-spacing:-0.143px;white-space:pre;">Alíquota</div>
<div class="t" style="left:519px;top:397px;font:11px 'Liberation Sans';line-height:13px;color:#aca899;letter-spacing:-0.083px;white-space:pre;">Valor Imposto</div>
<div class="t" style="left:593px;top:397px;font:11px 'Liberation Sans';line-height:13px;color:#aca899;letter-spacing:0.000px;white-space:pre;">Cod.Sit. Trib. MR</div>
</body></html>
